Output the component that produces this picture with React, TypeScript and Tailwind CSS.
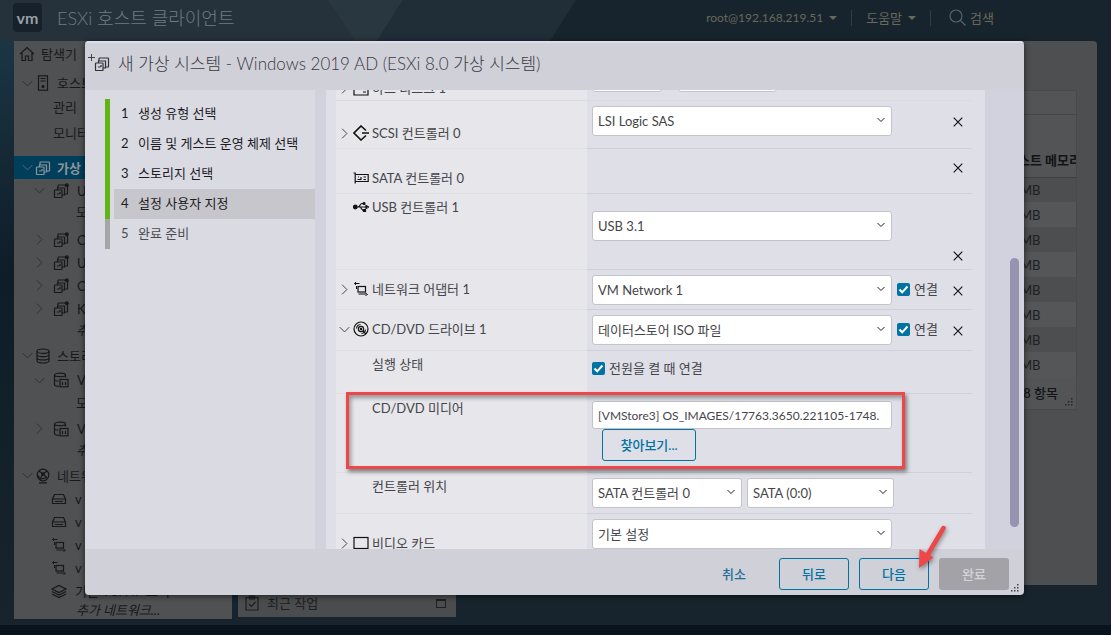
import React from 'react';

interface IconProps {
  className?: string;
}

const Svg: React.FC<IconProps & { children: React.ReactNode }> = ({ className = 'w-4 h-4', children }) => (
  <svg viewBox="0 0 16 16" fill="none" stroke="currentColor" strokeWidth="1.2" className={`shrink-0 ${className}`} aria-hidden="true">
    {children}
  </svg>
);

const HomeIcon = () => (
  <Svg>
    <path d="M1 8 8 1.5 15 8M3 7v7.5h3.5V10h3v4.5H13V7" />
  </Svg>
);

const HostIcon = () => (
  <Svg>
    <rect x="3.5" y="0.8" width="9" height="14.4" />
    <path d="M5.5 3.5h5M5.5 6h5" />
    <circle cx="8" cy="11.5" r="1" fill="currentColor" />
  </Svg>
);

const VmIcon: React.FC<IconProps & { dot?: boolean; plus?: boolean }> = ({ className, dot, plus }) => (
  <Svg className={className}>
    <path d="M5 5V2.6Q5 2 5.6 2h8.3Q14.5 2 14.5 2.6v7.8Q14.5 11 13.9 11H12" />
    <rect x="1.5" y="7" width="7.5" height="7.5" rx="0.6" />
    <path d="M4.5 7V5h7v7H9M4 11h2.5M7 9v2" />
    {dot && <circle cx="13.8" cy="2.2" r="2" fill="currentColor" stroke="none" />}
    {plus && <path d="M-6 1.5h7M-2.5-2v7" strokeWidth="0.9" />}
  </Svg>
);

const StorageIcon = () => (
  <Svg>
    <ellipse cx="8" cy="3.2" rx="6" ry="2.2" />
    <path d="M2 3.2v9.6c0 1.2 2.7 2.2 6 2.2s6-1 6-2.2V3.2M2 6.5c0 1.2 2.7 2.2 6 2.2s6-1 6-2.2M2 9.7c0 1.2 2.7 2.2 6 2.2s6-1 6-2.2" />
  </Svg>
);

const DatastoreIcon = () => (
  <Svg>
    <path d="M1.5 3v9.5c0 1 2 1.8 4.5 1.8M1.5 3c0-1 2.5-1.8 5.5-1.8S12.5 2 12.5 3v2.5M1.5 3c0 1 2.5 1.6 5.5 1.6S12.5 4 12.5 3M1.5 8c.6.8 2 1.2 4 1.2" />
    <rect x="7" y="7.5" width="8" height="7.3" />
    <path d="M9.5 10v3M12.5 10v3" />
  </Svg>
);

const NetworkIcon = () => (
  <Svg>
    <circle cx="8" cy="7" r="5.8" />
    <path d="M4 3l4 3 4-3M8 6l-3 5M8 6l4 4M2.5 7l3 4 6-1M4 14.8h8" />
    <circle cx="8" cy="6" r="1.2" fill="currentColor" />
  </Svg>
);

const SwitchIcon = () => (
  <Svg>
    <path d="M3.5 3.5h9l2 4.5v4.5h-13V8zM1.5 8h13M4 10.5h8" />
  </Svg>
);

const NicIcon = () => (
  <Svg>
    <rect x="5" y="5.5" width="7.5" height="5.5" />
    <path d="M1.5 2.5h5M3 1 1.5 2.5 3 4M5.5 13H13M14.5 13.5l-2-1.5M14.5 13.5l-2 1M3.5 5v3" strokeWidth="1" />
  </Svg>
);

const StackIcon = () => (
  <Svg>
    <path d="M1 6l7-3.5L15 6 8 9.5zM1 8.5 8 12l7-3.5M1 11l7 3.5 7-3.5" />
  </Svg>
);

const DiskIcon = () => (
  <Svg>
    <path d="M1 8V3h14v12H1V8.5h14M10 12h3" />
  </Svg>
);

const ScsiIcon = () => (
  <Svg>
    <path d="M13 5.5 8 1 1 8l7 7 5-4.5M9 8h7" strokeWidth="1.6" />
  </Svg>
);

const SataIcon = () => (
  <Svg>
    <path d="M.5 3h1.7v10.5M2.2 4.5h13v7h-13M4.5 9.5h3.5V7M10.5 7h2.5M10.5 9.5h2.5M5 7h1" />
  </Svg>
);

const UsbIcon = () => (
  <Svg>
    <circle cx="2.3" cy="8" r="1.8" fill="currentColor" />
    <path d="M4 8h10M5 8c2 0 2-3.500 4-3.500h2M6.500 8c2 0 2 3.500 4 3.500h1M13 6.500 15.500 8 13 9.500z" />
    <circle cx="11" cy="4.5" r="1" fill="currentColor" />
    <path d="M10.5 10.5h2v2h-2z" fill="currentColor" />
  </Svg>
);

const DiscIcon = () => (
  <Svg>
    <circle cx="8" cy="8" r="7" />
    <circle cx="8" cy="8" r="2.6" />
    <circle cx="8" cy="8" r=".6" />
    <path d="M3.5 7.5A4.5 4.5 0 0 1 7.5 3.5M12.5 8.5a4.5 4.5 0 0 1-4 4M10 10l3 3" />
  </Svg>
);

const MonitorIcon = () => (
  <Svg>
    <rect x="1" y="2.5" width="14" height="11" />
    <path d="M6 14.5h4" />
  </Svg>
);

const Chevron: React.FC<IconProps & { open?: boolean }> = ({ open, className = 'w-3 h-3' }) => (
  <Svg className={className}>
    <path d={open ? 'M1 4.5l7 7 7-7' : 'M4.5 1l7 7-7 7'} strokeWidth="1.4" />
  </Svg>
);

const Close: React.FC<{ label: string; className?: string }> = ({ label, className = '' }) => (
  <button aria-label={`${label} 제거`} className={`w-4 h-4 flex items-center justify-center text-[#15171a] ${className}`}>
    <svg viewBox="0 0 10 10" className="w-[10px] h-[10px]" fill="none" stroke="currentColor" strokeWidth="1.2">
      <path d="M.7.7l8.6 8.6M9.3.7.7 9.3" />
    </svg>
  </button>
);

const Grip: React.FC<IconProps> = ({ className = '' }) => (
  <svg viewBox="0 0 9 9" fill="currentColor" className={`w-[9px] h-[9px] ${className}`} aria-hidden="true">
    <path d="M6 0h1.5v1.5H6zM6 3h1.5v1.5H6zM3 3h1.5v1.5H3zM6 6h1.5v1.5H6zM3 6h1.5v1.5H3zM0 6h1.5v1.5H0z" />
  </svg>
);

interface NavItem {
  text: string;
  icon?: React.ReactNode;
  open?: boolean;
  row: string;
}

// indent of the row: top level, inventory object, or plain link
const top = 'pl-2 h-[23px] gap-[2px]';
const child = 'pl-5 h-[23px] gap-2';
const leaf = 'pl-[37px] h-[23px] gap-2';

const navItems: NavItem[] = [
  { text: '호스트', icon: <HostIcon />, open: true, row: 'pl-2 h-8 gap-[2px]' },
  { text: '관리', row: 'pl-[39px] h-4' },
  { text: '모니터', row: 'pl-[39px] h-9' },
  { text: '가상 시스템', icon: <VmIcon />, open: true, row: `${top} mt-[5px] bg-[#003f5c] text-[#8b9499] font-bold` },
  { text: 'U', icon: <VmIcon dot />, open: true, row: child },
  { text: '모니터', row: 'pl-[62px] h-5 mb-[6px]' },
  { text: 'C', icon: <VmIcon dot />, open: false, row: child },
  { text: 'U', icon: <VmIcon dot />, open: false, row: child },
  { text: 'C', icon: <VmIcon dot />, open: false, row: child },
  { text: 'K', icon: <VmIcon dot />, open: false, row: child },
  { text: '추가', row: 'pl-[62px] h-5 mb-1 italic' },
  { text: '스토리지', icon: <StorageIcon />, open: true, row: top },
  { text: 'V', icon: <DatastoreIcon />, open: true, row: 'pl-5 h-[26px] gap-2' },
  { text: '모니터', row: 'pl-[62px] h-5 mb-1' },
  { text: 'V', icon: <DatastoreIcon />, open: false, row: child },
  { text: '추가', row: 'pl-[62px] h-5 mb-1 italic' },
  { text: '네트워킹', icon: <NetworkIcon />, open: true, row: top },
  { text: 'v', icon: <SwitchIcon />, row: leaf },
  { text: 'v', icon: <SwitchIcon />, row: leaf },
  { text: 'v', icon: <NicIcon />, row: leaf },
  { text: 'v', icon: <NicIcon />, row: leaf },
  { text: '기본 TCP/IP 스택', icon: <StackIcon />, row: leaf },
  { text: '추가 네트워크...', row: 'pl-[62px] h-4 italic' },
];

const Sidebar: React.FC = () => (
  <nav className="w-[218px] shrink-0 bg-[#4f5153] text-[#17191b] overflow-hidden">
    <div className="h-[26px] pl-[5px] flex items-center gap-[6px]">
      <HomeIcon />
      탐색기
    </div>
    {navItems.map((item, i) => (
      <a key={i} href="#" className={`flex items-center whitespace-nowrap ${item.row}`}>
        {item.open !== undefined && <Chevron open={item.open} className="w-[11px] h-[11px] opacity-60" />}
        {item.icon}
        <span className={item.row.includes('gap-[2px]') ? 'ml-1' : ''}>{item.text}</span>
      </a>
    ))}
  </nav>
);

const Header: React.FC = () => (
  <header className="relative h-[41px] pl-[13px] flex items-center">
    <svg viewBox="0 0 600 41" className="absolute left-0 top-0 w-[600px] h-[41px]" aria-hidden="true">
      <path d="M0 0H403L377 41H0z" fill="#25323c" />
      <path d="M328 0H403L377 41H356z" fill="#293740" />
      <path d="M403 0H576L550 41H377z" fill="#202e38" />
    </svg>
    <div className="relative w-[29px] h-[29px] mb-[6px] rounded bg-[#16212b] flex items-center justify-center text-[#9a9fa3] font-bold text-base">vm</div>
    <h1 className="relative ml-[15px] mb-[6px] text-lg font-light text-[#707b82]">ESXi 호스트 클라이언트</h1>
    <div className="relative ml-auto mr-[117px] mb-[6px] flex items-center text-[#69685c]">
      <button className="flex items-center gap-[6px]">
        <span className="text-xs">root@192.168.219.51</span>
        <span className="border-x-4 border-t-4 border-x-transparent border-t-[#69685c]" />
      </button>
      <span className="w-px h-4 bg-[#303c43] mx-[14px]" />
      <button className="flex items-center gap-[6px]">
        도움말
        <span className="border-x-4 border-t-4 border-x-transparent border-t-[#69685c]" />
      </button>
      <span className="w-px h-4 bg-[#303c43] ml-[14px] mr-[18px]" />
      <button className="flex items-center gap-1">
        <svg viewBox="0 0 17 17" className="w-[17px] h-[17px]" fill="none" stroke="#56636b" strokeWidth="1.2">
          <circle cx="7" cy="7" r="6" />
          <path d="M11.5 11.5 16.5 16.5" />
        </svg>
        검색
      </button>
    </div>
  </header>
);

const VmList: React.FC = () => (
  <main className="flex-1 bg-[#4d4f51] text-[#1d1f21] pt-[49px] px-5 rounded-t-sm">
    <div className="border border-[#47494b] bg-[#525456]">
      <div className="h-[24px] border-b border-[#434547]" />
      <div className="h-[24px]" />
      <table className="w-full table-fixed">
        <thead>
          <tr className="h-[38px] border-b border-[#3e4042]">
            <th />
            <th className="w-[70px] pt-1 font-bold text-left whitespace-nowrap overflow-hidden text-[#121416]">호스트 메모리</th>
          </tr>
        </thead>
        <tbody>
          {Array.from({ length: 8 }, (_, i) => (
            <tr key={i} className="h-[25px] even:bg-[#545658] odd:bg-[#4c4e50]">
              <td />
              <td className="pl-[14px]">MB</td>
            </tr>
          ))}
        </tbody>
      </table>
      <div className="relative h-8 pr-[18px] flex items-center justify-end font-medium text-[#121416]">
        8 항목
        <Grip className="absolute right-[2px] bottom-[2px] opacity-70" />
      </div>
    </div>
  </main>
);

const RecentTasks: React.FC = () => (
  <section className="w-[218px] h-7 px-[6px] flex items-center gap-[7px] bg-[#4a4c4e] text-[#1d1f21]">
    <Svg>
      <path d="M2 2.5h12v12.5H2zM5.5 1.2h5v2.6h-5zM5 9l2.5 2.5L11.5 7" />
    </Svg>
    최근 작업
    <button aria-label="최대화" className="ml-auto mr-1 w-[10px] h-[9px] border border-t-2 border-[#1d1f21]" />
  </section>
);

const field = 'rounded-[3px] border border-[#c3c3c9] bg-white pl-[5px] text-[#454549]';

const Select: React.FC<{ value: string; label: string; className?: string }> = ({ value, label, className = 'w-[300px]' }) => (
  <span className={`relative inline-flex shrink-0 ${className}`}>
    <select aria-label={label} className={`${field} w-full h-[30px] appearance-none`}>
      <option>{value}</option>
    </select>
    <Svg className="absolute right-[7px] top-[10px] w-2 h-2 text-[#222] pointer-events-none">
      <path d="M1 4l7 7 7-7" strokeWidth="2" />
    </Svg>
  </span>
);

const Check: React.FC<{ text: string; className?: string }> = ({ text, className = '' }) => (
  <label className={`flex items-center gap-1 ${className}`}>
    <span className="relative w-[13px] h-[13px] shrink-0">
      <input type="checkbox" defaultChecked className="block w-[13px] h-[13px] appearance-none rounded-[2px] bg-[#0072a3]" />
      <svg viewBox="0 0 13 13" className="absolute inset-0 pointer-events-none" fill="none" stroke="#fff" strokeWidth="2">
        <path d="M2.5 6.5 5.2 9.3 10.5 3.5" />
      </svg>
    </span>
    {text}
  </label>
);

interface RowProps {
  label: string;
  icon?: React.ReactNode;
  open?: boolean;
  row: string;
  pad: string;
  children?: React.ReactNode;
}

const RowLabel: React.FC<Pick<RowProps, 'label' | 'icon' | 'open'>> = ({ label, icon, open }) => (
  <div className="h-5 flex items-center">
    <span className="w-[14px] flex text-[#444]">{open !== undefined && <Chevron open={open} className="w-[11px] h-[11px]" />}</span>
    <span className="w-4 flex text-[#111]">{icon}</span>
    <span className="ml-[3px]">{label}</span>
  </div>
);

const Row: React.FC<RowProps> = ({ label, icon, open, row, pad, children }) => (
  <div className={`flex ${row}`}>
    <div className={`w-[251px] shrink-0 bg-[#e6e6eb] border-b border-[#dfdfe6] pl-[3px] ${pad}`}>
      <RowLabel label={label} icon={icon} open={open} />
    </div>
    <div className="flex-1 min-w-0 flex items-start pl-[5px] pt-[5px] border-b border-[#d0d0d8]">{children}</div>
  </div>
);

const steps = ['생성 유형 선택', '이름 및 게스트 운영 체제 선택', '스토리지 선택', '설정 사용자 지정', '완료 준비'];

const Steps: React.FC<{ current: number }> = ({ current }) => (
  <ol className="w-[230px] shrink-0 pl-5 pt-[9px] bg-[#dadae3]">
    {steps.map((step, i) => (
      <li
        key={step}
        className={`h-[30px] border-l-5 pl-1 ${i <= current ? 'border-[#60b515] text-[#1c1c1f]' : 'border-[#a5a5a8] text-[#4c4c50]'}`}
      >
        <a href="#" className={`h-full pl-[7px] pb-[2px] flex items-center ${i === current ? 'bg-[#c6c6cc]' : ''}`}>
          <span className="w-[17px]">{i + 1}</span>
          {step}
        </a>
      </li>
    ))}
  </ol>
);

const Hardware: React.FC = () => (
  <div className="relative flex-1 min-w-0 overflow-hidden bg-[#d2d2de] pl-[11px] pr-[39px]">
    <div className="min-h-full bg-[#dfdfe7] pl-[10px] pr-[13px]">
      {/* first row is scrolled under the title bar */}
      <div className="h-[11px] flex items-end overflow-hidden border-b border-[#dadae2]">
        <div className="w-[251px] shrink-0 bg-[#e6e6eb] pl-[3px] pb-[2px]">
          <RowLabel label="하드 디스크 1" icon={<DiskIcon />} open={false} />
        </div>
        <div className="pl-[5px] pb-2 flex gap-4">
          <span className="w-[70px] h-[30px] rounded-[3px] border border-[#c3c3c9] bg-white" />
          <span className="w-[99px] h-[30px] rounded-[3px] border border-[#c3c3c9] bg-white" />
        </div>
      </div>
      <Row label="SCSI 컨트롤러 0" icon={<ScsiIcon />} open={false} row="h-12" pad="pt-[22px]">
        <Select label="SCSI 컨트롤러 0" value="LSI Logic SAS" />
        <Close label="SCSI 컨트롤러 0" className="ml-auto mr-[6px] mt-2" />
      </Row>
      <Row label="SATA 컨트롤러 0" icon={<SataIcon />} row="h-[45px]" pad="pt-[19px]">
        <Close label="SATA 컨트롤러 0" className="ml-auto mr-[6px] mt-[6px]" />
      </Row>
      <Row label="USB 컨트롤러 1" icon={<UsbIcon />} row="h-[76px]" pad="pt-[3px]">
        <Select label="USB 컨트롤러 1" value="USB 3.1" className="w-[300px] mt-3" />
        <Close label="USB 컨트롤러 1" className="ml-auto mr-[6px] self-end mb-[5px]" />
      </Row>
      <Row label="네트워크 어댑터 1" icon={<NicIcon />} open={false} row="h-10" pad="pt-[9px]">
        <Select label="네트워크 어댑터 1" value="VM Network 1" />
        <Check text="연결" className="ml-[5px] mt-1" />
        <Close label="네트워크 어댑터 1" className="ml-auto mr-[6px] mt-2" />
      </Row>
      <Row label="CD/DVD 드라이브 1" icon={<DiscIcon />} open row="h-[41px]" pad="pt-[9px]">
        <Select label="CD/DVD 드라이브 1" value="데이터스토어 ISO 파일" />
        <Check text="연결" className="ml-[5px] mt-1" />
        <Close label="CD/DVD 드라이브 1" className="ml-auto mr-[6px] mt-2" />
      </Row>
      <Row label="실행 상태" row="h-[43px]" pad="pt-[3px]">
        <Check text="전원을 켤 때 연결" className="mt-[2px]" />
      </Row>
      <div className="relative">
        <Row label="CD/DVD 미디어" row="h-[79px]" pad="pt-1">
          <div className="w-[300px] pt-[2px]">
            <input
              aria-label="CD/DVD 미디어"
              defaultValue="[VMStore3] OS_IMAGES/17763.3650.221105-1748."
              className={`${field} block w-full h-7 text-xs`}
            />
            <button className="ml-[10px] w-[94px] h-8 rounded-[3px] border border-[#0072a3] text-[#0072a3] font-medium">
              찾아보기...
            </button>
          </div>
        </Row>
        <div className="absolute left-[10px] right-[67px] -top-[2px] bottom-1 border-3 border-[#ee4649] shadow-[2px_3px_4px_rgba(0,0,0,0.45),inset_2px_3px_4px_rgba(0,0,0,0.35)] pointer-events-none" />
      </div>
      <Row label="컨트롤러 위치" row="h-[41px]" pad="pt-[3px]">
        <Select label="컨트롤러" value="SATA 컨트롤러 0" className="w-[150px]" />
        <Select label="위치" value="SATA (0:0)" className="w-[147px] ml-[5px]" />
      </Row>
      <Row label="비디오 카드" icon={<MonitorIcon />} open={false} row="h-12" pad="pt-[19px]">
        <Select label="비디오 카드" value="기본 설정" />
      </Row>
    </div>
    <div className="absolute right-[5px] top-[168px] bottom-[22px] w-[9px] rounded-full bg-[#9692b0]" />
  </div>
);

const action = 'w-[70px] h-8 rounded-[3px] font-medium';

const Wizard: React.FC = () => (
  <div
    role="dialog"
    aria-label="새 가상 시스템"
    className="absolute top-[41px] left-[85px] right-[87px] bottom-[40px] flex flex-col rounded bg-[#d0d0d9] text-[#454549] overflow-hidden shadow-[0_1px_6px_rgba(0,0,0,0.6)]"
  >
    <div className="h-[49px] shrink-0 pl-[9px] pb-[6px] flex items-center gap-2 border-t-2 border-[#dcdcea]">
      <VmIcon plus className="w-4 h-4 overflow-visible text-[#333]" />
      <h2 className="text-[17px] font-light text-[#3a3a3f]">새 가상 시스템 - Windows 2019 AD (ESXi 8.0 가상 시스템)</h2>
    </div>
    <div className="flex-1 min-h-0 flex">
      <Steps current={3} />
      <Hardware />
    </div>
    <div className="relative h-[46px] shrink-0 pr-[15px] pt-1 flex items-center justify-end gap-[10px]">
      <button className={`${action} text-[#1f6e97]`}>취소</button>
      <button className={`${action} border border-[#0072a3] text-[#0072a3]`}>뒤로</button>
      <button className={`${action} relative border border-[#0072a3] text-[#0072a3]`}>
        다음
        <svg viewBox="0 0 34 50" className="absolute -top-[37px] -right-[21px] w-[34px] h-[50px] drop-shadow-[1px_2px_2px_rgba(0,0,0,0.4)]" aria-hidden="true">
          <path d="M28.5 6 12.5 33" stroke="#ee4649" strokeWidth="4.5" strokeLinecap="round" />
          <path d="M4 46 4.5 27 18.5 35.5z" fill="#ee4649" />
        </svg>
      </button>
      <button disabled className={`${action} bg-[#a3a3a7] text-[#d4d4d9]`}>완료</button>
      <Grip className="absolute right-1 bottom-[2px] text-[#44444a]" />
    </div>
  </div>
);

const App: React.FC = () => (
  <div className="relative min-h-screen flex flex-col overflow-hidden bg-[#17242d] font-['Lato','Noto_Sans_CJK_KR',sans-serif] text-[13px] leading-5">
    <Header />
    <div className="flex-1 flex gap-[6px] px-[14px] pb-[6px] bg-linear-to-br from-[#1b3644] from-0% via-[#0f1d28] via-20% to-[#17242d] to-50%">
      <Sidebar />
      <div className="flex-1 flex flex-col gap-1 pb-[2px]">
        <VmList />
        <RecentTasks />
      </div>
    </div>
    <div className="h-[10px] bg-[#08131d]" />
    <Wizard />
  </div>
);

export default App;
